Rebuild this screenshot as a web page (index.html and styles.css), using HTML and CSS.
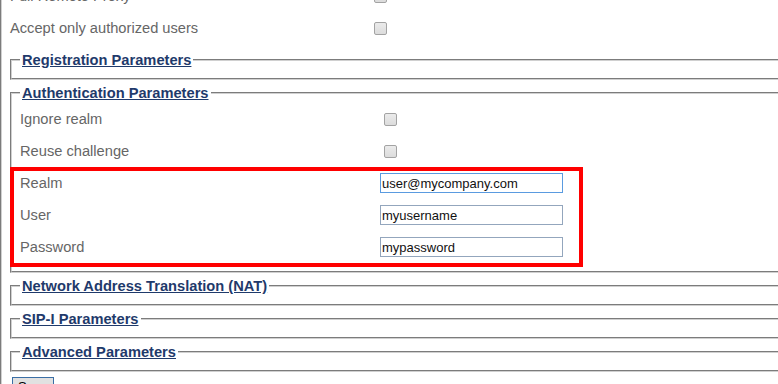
FILE: index.html
```html
<!DOCTYPE html>
<html>
<head>
    <title>SIP Account Settings</title>
    <link rel="stylesheet" href="styles.css">
</head>
<body>
    <div class="panel">
        <div class="row">
            <span class="label">Full Remote Proxy</span>
            <span class="value"><input type="checkbox" checked></span>
        </div>
        <div class="row">
            <span class="label">Accept only authorized users</span>
            <span class="value"><input type="checkbox"></span>
        </div>

        <fieldset class="group">
            <legend><a href="#">Registration Parameters</a></legend>
        </fieldset>

        <fieldset class="group">
            <legend><a href="#">Authentication Parameters</a></legend>
            <div class="rows">
                <div class="row">
                    <span class="label">Ignore realm</span>
                    <span class="value"><input type="checkbox"></span>
                </div>
                <div class="row">
                    <span class="label">Reuse challenge</span>
                    <span class="value"><input type="checkbox"></span>
                </div>
                <div class="marked">
                    <div class="row">
                        <span class="label">Realm</span>
                        <span class="value"><input type="text" class="text focused" value="user@mycompany.com"></span>
                    </div>
                    <div class="row">
                        <span class="label">User</span>
                        <span class="value"><input type="text" class="text" value="myusername"></span>
                    </div>
                    <div class="row">
                        <span class="label">Password</span>
                        <span class="value"><input type="text" class="text" value="mypassword"></span>
                    </div>
                    <!-- annotation box drawn over the three fields -->
                    <div class="highlight"></div>
                </div>
            </div>
        </fieldset>

        <fieldset class="group">
            <legend><a href="#">Network Address Translation (NAT)</a></legend>
        </fieldset>

        <fieldset class="group">
            <legend><a href="#">SIP-I Parameters</a></legend>
        </fieldset>

        <fieldset class="group">
            <legend><a href="#">Advanced Parameters</a></legend>
        </fieldset>

        <button class="save">Save</button>
    </div>
</body>
</html>
```

FILE: styles.css
```css
html, body {
    margin: 0;
    overflow: hidden;
    background-color: white;
}

body {
    font-family: "Liberation Sans", Arial, sans-serif;
    font-size: 11pt;
}

.panel {
    width: 1000px;
    margin-top: -20px;
    padding-left: 8px;
    border-left: 2px groove #d0d0d0;
}

.row {
    display: grid;
    grid-template-columns: 360px 1fr;
    align-items: center;
    height: 32px;
}

.label {
    color: #666;
    line-height: 32px;
}

.value {
    display: flex;
    align-items: center;
}

input[type="checkbox"] {
    appearance: none;
    width: 13px;
    height: 13px;
    margin: 0 0 0 4px;
    border: 1px solid #a3a3a3;
    border-radius: 2px;
    background: linear-gradient(#ebebeb, #dcdcdc);
}

input[type="checkbox"]:checked {
    background: radial-gradient(circle, #555 30%, #dcdcdc 45%);
}

.text {
    box-sizing: border-box;
    width: 183px;
    height: 20px;
    margin: 0;
    padding: 0 1px;
    border: 1px solid #93a6bd;
    font-family: "Liberation Sans", Arial, sans-serif;
    font-size: 13px;
    color: #111;
    outline: none;
}

.text.focused {
    border-color: #5a9be0;
}

.group {
    margin: 0 0 5px 0;
    padding: 0 8px 10px;
    border: 2px groove #d0d0d0;
    min-inline-size: 0;
}

.panel > .row + .group {
    margin-top: 8px;
}

.group legend {
    margin: 0;
    padding: 0 2px;
    line-height: 16px;
    font-weight: bold;
}

.group legend a {
    color: #1f3a6b;
    text-decoration: underline;
}

.rows {
    margin: 2px 0 -2px;
}

.marked {
    position: relative;
}

.highlight {
    position: absolute;
    top: 0;
    left: -10px;
    width: 565px;
    height: 92px;
    border: 4px solid #ff0000;
}

.save {
    margin: 0 0 0 2px;
    padding: 1px 5px;
    border: 1px solid #3a6ea5;
    border-radius: 0;
    background-color: #e1e1e1;
    font-family: "Liberation Sans", Arial, sans-serif;
    font-size: 13px;
    color: #000;
}
```
